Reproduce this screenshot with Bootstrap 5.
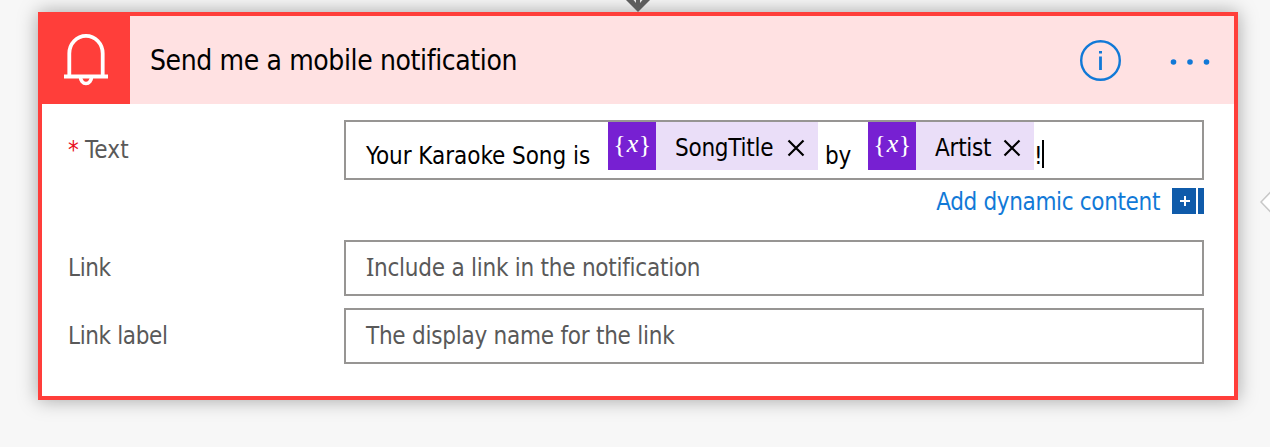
<!DOCTYPE html>
<html lang="en">
<head>
<meta charset="utf-8">
<meta name="viewport" content="width=device-width, initial-scale=1">
<title>Send me a mobile notification</title>
<link href="https://cdn.jsdelivr.net/npm/bootstrap@5.3.0/dist/css/bootstrap.min.css" rel="stylesheet">
<style>
body{background:#f7f7f7;height:447px;font-family:"DejaVu Sans Condensed","DejaVu Sans",sans-serif;font-stretch:condensed;font-size:24px;line-height:28px;color:#000}
.flow-area{padding:12px 32px 0 38px;height:447px}
.action-card{height:388px;border:4px solid #ff3e3a;border-radius:0;box-shadow:0 0 18px rgba(0,0,0,.34)}
.action-head{height:88px;background:#ffe1e2}
.bell-tile{width:92px;margin-left:-4px;background:#ff3e3a}
.head-title{font-size:28px;margin-left:20px;padding-top:2px;letter-spacing:-.38px}
.info-btn{margin-right:49px}
.dots-btn{margin-right:23px}
.fields{padding:16px 30px 0 26px}
.label-col{width:276px;color:#595959;letter-spacing:-.38px}
.req{color:#e81123}
.text-label{letter-spacing:.2px}
.box-field{width:860px;height:56px;border:2px solid #979593;border-radius:0;padding:0 20px;color:#595959;background:#fff;white-space:nowrap;letter-spacing:-.25px}
.editor{height:60px;color:#000}
.editor .plain{line-height:28px;margin-top:20px}
.lead-text{width:242px;letter-spacing:-.05px}
.mid-text{width:50px;padding-left:7px}
.token{height:48px;background:#eadef8}
.token-icon{width:48px;height:48px;background:#7720d2;flex:none;font-family:"Liberation Serif",serif;font-size:26px;fill:#fff;text-anchor:middle;letter-spacing:0}
.token-label{margin:12px 0 0 19px}
.token-x{margin:17px 13px 0 auto}
.token-song{width:210px}.token-artist{width:166px}
.end-text{width:8px}
.caret{width:2px;height:28px;background:#000;margin-top:18px}
.dynamic{width:860px;height:44px;color:#1179d7;letter-spacing:-.35px;gap:12px}
.dynamic svg{margin-top:-2px}
.link-row + .link-row{margin-top:12px}
.panel-arrow{right:0;top:191px}
.in-arrow{left:625px;top:0}
.serif-i{font-family:"Noto Sans",sans-serif;font-size:24.5px;line-height:1}
</style>
</head>
<body class="overflow-hidden position-relative">
<svg class="in-arrow position-absolute z-1" width="26" height="12" viewBox="0 0 26 12"><path d="M1 0H25L13 12Z" fill="#5d5d5d"/><path d="M8.500 0H11V3ZM15 0h2.500L15 3Z" fill="#e8e8e8"/></svg>
<svg class="panel-arrow position-absolute" width="10" height="22" viewBox="0 0 10 22"><path d="M11 0.500L1 11L11 21.500" fill="#fff" stroke="#c8c8c8" stroke-width="1.500"/></svg>
<main class="flow-area">
<section class="card action-card">
<header class="action-head d-flex align-items-center">
<div class="bell-tile h-100 d-flex"><svg width="92" height="88" viewBox="38 16 92 88" fill="none" stroke="#fff" stroke-width="3.800"><path d="M69.300 76V53.500A16.700 17.600 0 0 1 102.700 53.500V76M64 76.500H108"/><path d="M80.500 77a5.500 6.500 0 0 0 11 0" stroke-width="3.600"/></svg></div>
<span class="head-title text-nowrap">Send me a mobile notification</span>
<svg class="info-btn ms-auto" width="42" height="42" viewBox="0 0 42 42"><circle cx="21.500" cy="21.500" r="19.300" fill="none" stroke="#1179d7" stroke-width="2.400"/><path d="M20 12h3v2.600h-3zM20.100 17.500h2.800v13.600h-2.800z" fill="#1179d7"/></svg>
<svg class="dots-btn" width="41" height="10" viewBox="0 0 41 10" fill="#1179d7"><circle cx="3.500" cy="7" r="2.800"/><circle cx="20" cy="7" r="2.800"/><circle cx="36.500" cy="7" r="2.800"/></svg>
</header>
<div class="fields">
<div class="d-flex">
<div class="label-col pt-3"><span class="req">*</span> <span class="text-label">Text</span></div>
<div>
<div class="box-field editor d-flex">
<span class="plain lead-text">Your Karaoke Song is</span>
<span class="token token-song d-flex"><svg class="token-icon" viewBox="0 0 48 48"><text y="30.500"><tspan x="11.500">{</tspan><tspan x="24.500" y="30" font-style="italic">x</tspan><tspan x="37" y="30.500">}</tspan></text></svg><span class="token-label">SongTitle</span><svg class="token-x" width="18" height="18" viewBox="0 0 18 18"><path d="M1.500 1.500L16.500 16.500M16.500 1.500L1.500 16.500" stroke="#000" stroke-width="2.200"/></svg></span>
<span class="plain mid-text">by</span>
<span class="token token-artist d-flex"><svg class="token-icon" viewBox="0 0 48 48"><text y="30.500"><tspan x="11.500">{</tspan><tspan x="24.500" y="30" font-style="italic">x</tspan><tspan x="37" y="30.500">}</tspan></text></svg><span class="token-label">Artist</span><svg class="token-x" width="18" height="18" viewBox="0 0 18 18"><path d="M1.500 1.500L16.500 16.500M16.500 1.500L1.500 16.500" stroke="#000" stroke-width="2.200"/></svg></span>
<span class="plain end-text">!</span><span class="caret"></span>
</div>
<div class="dynamic d-flex justify-content-end align-items-center mb-3"><span>Add dynamic content</span><svg width="32" height="26" viewBox="0 0 32 26"><path d="M0 0h24v26H0zM26 0h6v26h-6z" fill="#0f5baa"/><path d="M8 13h10M13 8v10" stroke="#fff" stroke-width="2"/></svg></div>
</div>
</div>
<div class="d-flex align-items-center link-row"><div class="label-col">Link</div><div class="box-field d-flex align-items-center"><span><span class="serif-i">I</span>nclude a link in the notification</span></div></div>
<div class="d-flex align-items-center link-row"><div class="label-col">Link label</div><div class="box-field d-flex align-items-center"><span>The display name for the link</span></div></div>
</div>
</section>
</main>
<script src="https://cdn.jsdelivr.net/npm/bootstrap@5.3.0/dist/js/bootstrap.bundle.min.js"></script>
</body>
</html>
